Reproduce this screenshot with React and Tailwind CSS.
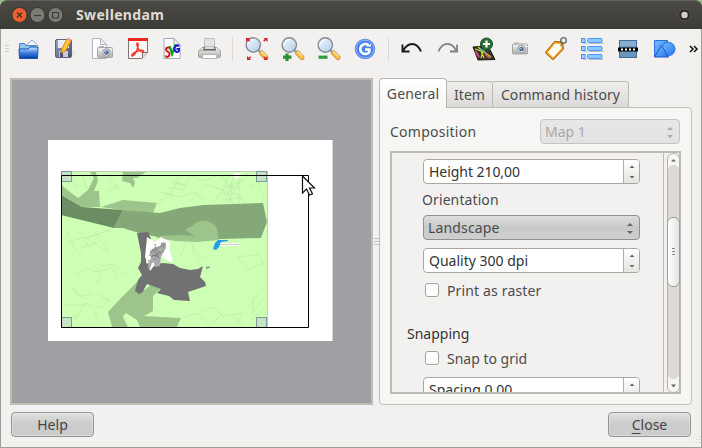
import React from "react";

function Icon({ children, dx = 0 }) {
  return (
    <div className="flex h-6 w-9 shrink-0 items-center justify-center">
      <svg width="24" height="24" viewBox="0 0 24 24" fill="none" className="overflow-visible">
        <g transform={`translate(${dx} 0)`}>{children}</g>
      </svg>
    </div>
  );
}

function Camera({ x, y }) {
  return (
    <g transform={`translate(${x} ${y})`}>
      <rect x="2" y="0" width="5" height="3" fill="#bbb" />
      <rect x=".5" y="1.5" width="15" height="10" rx="1" fill="url(#silver)" stroke="#a5a5a5" />
      <path d="M1 4h15" stroke="#eee" />
      <circle cx="9.5" cy="6.5" r="3.8" fill="#e6e6e6" stroke="#999" />
      <circle cx="9.5" cy="6.5" r="2.3" fill="#41618f" />
      <circle cx="9" cy="6" r=".9" fill="#9cc0ef" />
    </g>
  );
}

function Lens() {
  return (
    <>
      <path d="m16.500 16 4.500 4.500" stroke="#b98a36" strokeWidth="5" strokeLinecap="round" />
      <path d="m16.500 16 4.500 4.500" stroke="#ffbd35" strokeWidth="3.600" strokeLinecap="round" />
      <path d="m16.500 14.500 5 5" stroke="#ffe9a0" strokeWidth="1.200" />
      <path d="m13 13 2.500 2.500" stroke="#a5a5a5" strokeWidth="2.500" />
      <circle cx="8.300" cy="8" r="7.200" fill="url(#lens)" stroke="#858b91" strokeWidth="1.400" />
      <path d="M3.500 7a5 5 0 0 1 5-4" stroke="#fff" />
    </>
  );
}

function Defs() {
  return (
    <svg width="0" height="0" className="absolute">
      <defs>
        <linearGradient id="silver" x2="0" y2="1"><stop stopColor="#f0f0f0" /><stop offset="1" stopColor="#b0b0b0" /></linearGradient>
        <linearGradient id="blue" x2="1" y2="1"><stop stopColor="#7dbcff" /><stop offset="1" stopColor="#2277f0" /></linearGradient>
        <linearGradient id="folder" x2="0" y2="1"><stop stopColor="#d5ebff" /><stop offset=".5" stopColor="#3e83dd" /><stop offset="1" stopColor="#073ba3" /></linearGradient>
        <linearGradient id="lens" x2="1" y2="1"><stop stopColor="#f4faff" /><stop offset="1" stopColor="#afcbe8" /></linearGradient>
        <linearGradient id="disk" x2="1" y2="1"><stop stopColor="#9ca4bd" /><stop offset="1" stopColor="#474c70" /></linearGradient>
      </defs>
    </svg>
  );
}

function TitleBar() {
  return (
    <div className="h-[29px] shrink-0 bg-[#9dbb8e]">
      <div className="flex h-[29px] items-center rounded-t-[7px] border-t border-[#62615b] bg-linear-to-b from-[#4a4943] to-[#3c3b37] pl-3 pr-[10px]">
        <svg width="52" height="18" viewBox="0 0 52 18" fill="none" className="-mt-px">
          <circle cx="7.500" cy="9" r="7.500" fill="#ec6034" stroke="#34332f" />
          <path d="m5 6.500 5 5m0-5-5 5" stroke="#52291c" strokeWidth="1.300" />
          <circle cx="25.500" cy="9" r="7.500" fill="#7b7a73" stroke="#34332f" />
          <path d="M22 9.500h7" stroke="#3c3b37" strokeWidth="1.200" />
          <circle cx="43.500" cy="9" r="7.500" fill="#7b7a73" stroke="#34332f" />
          <path d="M40.500 6.500h6v5.500h-6z" stroke="#3c3b37" strokeWidth="1.200" />
        </svg>
        <span className="-mt-px ml-3 grow text-[14px] font-bold tracking-[0.35px] text-[#dfdbd2]">Swellendam</span>
        <svg width="14" height="14" viewBox="0 0 14 14" className="-mt-px">
          <circle cx="6.500" cy="7" r="6" fill="#2d2c29" stroke="#55544e" />
          <circle cx="6.500" cy="7" r="3.200" fill="#d4cfc5" />
        </svg>
      </div>
    </div>
  );
}

function Toolbar() {
  return (
    <div className="flex h-[40px] shrink-0 items-center">
      <svg width="9" height="8" viewBox="0 0 9 8" className="shrink-0"><path d="M4 .500h4M4 3.500h4M4 6.500h4" stroke="#cbc8c4" /></svg>
      <Icon>
        <path d="M9 9.500 16 3l5.500 5v4H9z" fill="#f4f9ff" stroke="#8fa9cc" />
        <path d="M3.500 6.500h5l1.500 2h10v5h-16.500z" fill="#8cc6ec" stroke="#4a80c4" />
        <path d="M3 12h9l2-2h8l-.500 11.500h-18z" fill="url(#folder)" stroke="#1450b2" />
      </Icon>
      <Icon>
        <path d="M20 14h4l-3 5z" fill="#dddce2" />
        <rect x="3.500" y="2.500" width="16" height="18" rx="1.500" fill="url(#disk)" stroke="#5d6283" />
        <path d="M6 3h11v8H6z" fill="#e8ebf6" />
        <path d="M7 14h9v6H7z" fill="#c8cbd6" /><path d="M8 15h3v5H8z" fill="#50536c" />
        <path d="m9.500 12 5.500-10 4 2-5.500 10-4 2z" fill="#ffb51e" stroke="#d88210" strokeWidth=".8" />
        <path d="m12 12 5-9" stroke="#ffe18a" /><path d="m15 2 4 2 .800-1.500-4-2z" fill="#efa796" />
      </Icon>
      <Icon dx={2}><path d="M2.500 1.500h8l6 6v14h-14zM10.500 1.500v6h6" fill="#fdfdff" stroke="#b0b3c4" /><Camera x={7} y={9} /></Icon>
      <Icon dx={2}>
        <path d="M2.500 1.500h19v14l-5.500 6H2.500z" fill="#faf8f7" stroke="#7d7675" />
        <path d="M2 1h20v3H2z" fill="#ee2725" />
        <path d="M16.500 21v-5.500h5" fill="#e1dcda" stroke="#7d7675" />
        <path d="M11.500 6c-2 0 .500 7 3.500 8.500 2 1.500 4 .500 2-1-2-.800-9 1.500-11 4-1.200 2 1 2 3-.500C11 14 13.500 6 11.500 6z" stroke="#ef3a2d" strokeWidth="1.400" />
      </Icon>
      <Icon dx={.5}>
        <path d="M3.500 1.500h10l6 6v14h-16zM13.500 1.500v6h6" fill="#fdfdff" stroke="#a4a8c0" />
        <path d="M10.500 12c-1-2-5-2-5 .500 0 2.500 4 2 3.500 5s-3.500 3-4 1" stroke="#e01515" strokeWidth="2" />
        <path d="m9 9 2.500 8L15 7.500" stroke="#09a214" strokeWidth="2.200" />
        <path d="M18.500 9.500c-2-2.500-5 0-4.500 3s3.500 3 4.500 1.500V12H16" stroke="#1717dd" strokeWidth="2" />
      </Icon>
      <Icon dx={2}>
        <path d="M6.500 1.500h10v10h-10z" fill="#e4e4e4" stroke="#c0c0c0" />
        <path d="M4 10.500h15l3.500 3.500v5q0 1.500-1.500 1.500H2q-1.500 0-1.500-1.500v-5z" fill="url(#silver)" stroke="#a5a5a5" />
        <path d="M6 9.500h11l1 4H5z" fill="#5c5c5c" /><path d="M7 9.500h9l.500 2.500h-10z" fill="#ddd" />
        <path d="M5 17.500h13l1 4H4z" fill="#fdfdfd" stroke="#b5b5b5" />
        <path d="M2.500 13.500h2" stroke="#79c552" />
      </Icon>
      <div className="mx-[6px] h-6 w-px shrink-0 bg-[#d9d6d3]" />
      <Icon><Lens /><path d="M1 1h4L3.800 2.200l1.500 1.500-1 1-1.500-1.500L1 5zM22.500 1h-4l1.200 1.200-1.500 1.500 1 1 1.500-1.500L22.500 5zM2 23h4l-1.200-1.200 1.500-1.500-1-1-1.500 1.500L2 19zM22.500 23h-4l1.200-1.200-1.500-1.500 1-1 1.500 1.500 1.300-1.300z" fill="#d5202c" /></Icon>
      <Icon><Lens /><path d="M6 16.500v7.500M2 20.200h8.500" stroke="#2c942f" strokeWidth="3.300" /></Icon>
      <Icon><Lens /><path d="M1.500 20.200h9" stroke="#2f9a38" strokeWidth="3.200" /></Icon>
      <Icon>
        <circle cx="12" cy="12" r="9.800" fill="#4b84e8" stroke="#5f8cdb" />
        <circle cx="12" cy="12" r="8.800" stroke="#8fb3fa" />
        <path d="M15.500 8.200a5 5 0 1 0 .800 6.800v-2.500H12" stroke="#fff" strokeWidth="2.600" /><path d="M13 9.500h5V7z" fill="#fff" />
      </Icon>
      <div className="ml-[5px] mr-[5px] h-6 w-px shrink-0 bg-[#d9d6d3]" />
      <Icon dx={-.5}><path d="M3 7.500v7h7M3.500 14C8 5 17 4 21.500 14.500" stroke="#1a1a1a" strokeWidth="1.900" /></Icon>
      <Icon><path d="M21 7.500v7h-7M20.500 14C16 5 7 4 2.500 14.500" stroke="#808080" strokeWidth="1.800" /></Icon>
      <Icon>
        <path d="m1 10 15-1 7 13.500-17 .500z" fill="#38382c" stroke="#151510" />
        <path d="m3 12 6 2 3 7M6 10l6 5 7 5M12 12l-3 9" stroke="#d5de25" strokeWidth="1.200" />
        <path d="m3 14 4 6M13 17l5 4" stroke="#dc4975" strokeWidth="1.800" /><path d="m8 12 5 3" stroke="#53b1a5" strokeWidth="1.500" />
        <circle cx="14.500" cy="7" r="6" fill="#2a7137" stroke="#1d4a26" />
        <path d="M14.500 3.500v7M11 7h7" stroke="#fff" strokeWidth="2.200" />
      </Icon>
      <Icon><Camera x={4} y={5.5} /></Icon>
      <Icon dx={-.5}>
        <path d="m11 4.500 8 .500 1 7-9.500 10q-1 1-2 0l-6-5.500q-1-1 0-2z" fill="#f59b16" stroke="#a76208" />
        <path d="m11.500 6.500 6 .500.500 4.500-8.500 9-5.200-5z" fill="#fffaf0" />
        <path d="m17 9 1.500-3" stroke="#666" />
        <circle cx="20" cy="3.500" r="2.800" stroke="#626262" strokeWidth="1.300" />
      </Icon>
      <Icon>
        {[1.5, 9.5, 17.5].map((y) => (
          <g key={y}>
            <path d={`M3 ${y + 4.800}h4M9 ${y + 4.800}h14.500`} stroke="#bfc3c8" strokeWidth="1.300" />
            <rect x="1.500" y={y} width="3.500" height="4" fill="#9fcbff" stroke="#4c90f5" />
            <rect x="7.500" y={y} width="14.500" height="4" rx="1" fill="#8cc6ff" stroke="#4b96fa" />
          </g>
        ))}
      </Icon>
      <Icon>
        <rect x="3.500" y="3.500" width="17" height="17" fill="#6995bf" stroke="#426b97" />
        <path d="M4 4h16v5H4z" fill="#88afd1" />
        <path d="M2 12.500h20" stroke="#000" strokeWidth="4" /><path d="M5 12.500h16" stroke="#fff" strokeWidth="2" strokeDasharray="2 2" />
      </Icon>
      <Icon>
        <path d="M2.500 3.500h13v16h-13z" fill="url(#blue)" stroke="#2a72dc" />
        <circle cx="16.300" cy="12" r="6.700" fill="url(#blue)" stroke="#2a72dc" />
        <path d="m2.500 20 7-11.500L16.500 20z" fill="url(#blue)" stroke="#1b57c4" />
      </Icon>
      <svg width="10" height="8" viewBox="0 0 10 8" className="ml-[7px] shrink-0"><path d="m1 1 3 3-3 3m4-6 3 3-3 3" fill="none" stroke="#111" strokeWidth="1.500" /></svg>
    </div>
  );
}

function Handle({ x, y }) {
  return <rect x={x} y={y} width="10" height="10" fill="#c8dfc5" fillOpacity=".9" stroke="#769d98" />;
}

function MapCanvas() {
  return (
    <div className="h-[327px] w-[363px] shrink-0 border-2 border-[#bebbb5] bg-[#a09fa4]">
      <svg width="359" height="323" viewBox="12 80 359 323" className="block">
        <path d="M48 140h285v201H48z" fill="#fff" />
        <path d="M332 140h1v201h-1z" fill="#d5d4d8" />
        <path d="M61 171h207v157H61z" fill="#cdffb4" />
        <g fill="none" stroke="#bbe8a5" strokeWidth=".6">
          <path d="m70 176 8 12m4-14 5 15m20-15 12 17m-14 2 14-8M158 205l20-22 7 2 5-9 14 5 14-6M164 193l16 4 15-5 10 9M168 187l17 3m-13-9 16 6m-10-10-7 22m-14-7 14 2m27-2-7 10M204 184l19 6 6-16m-6 16 18-9m-18 9 12 15m-12-15-9 12M233 178l-8 25m15-23-12 22m-5-17 18 3m-20 5 21 2m-21 5 23-3m-5-14v20m-7-21-2 21M250 188l15-13m-9 0 9 26M220 175l25 28m1-26-22 19" />
          <path d="m66 232 9 14m4-15 12 19m4-18 13 19m1-21-23 9M68 242l42-11M64 237l20 21M75 276l12-8 9 4 14-3m-16-4 8 11-6 8m5-18 14-2 9 11m-11-8 4 14M72 288l8 8 12-2m-21-9 7 11 10 3m-13 22 9-18 17 5 9-12m-17 12 6 15m-20-8-12 6m44-19-15-9M186 242l-6 16m9-17 13 18 7-4M195 238l-3 11 7 12M238 257l22-3 5 15m-28-12 12 13 16-8M183 317l15-4 11 13 13-12 12 3 10 11M202 311l12-4 10 11m6-3 14-2m-2 1-5 10M248 308l16-20m-13 27 13-17m-12 22 12-11M253 295v18M65 305h22M80 248l18-5M86 238l23 15" />
        </g>
        <g fill="#9dc58b">
          <path d="m61 185 17 13 10-8 6-12-4-6h6l2 9-4 10h5l1 16H82L61 195z" />
          <path d="M123 172h23l-9 6h-4l2 5-2 5-3-5-8-2zM101 207l22-7 34 3-4 10-31-3z" />
          <path d="m137 282 8 8 7-7 12 2-11 11v15l-9 5 37 2-4 9h-37l-3-7-11-7q-3 2-3 4l5 10h-16l-4-15 12-13z" />
        </g>
        <path d="m61 195 21 12 41 3-9 18-53-13z" fill="#6b8d63" />
        <path d="m123 210 37 3 20-5 23-3 60-2 4 19-6 16-41 1-20-2-20 1-22-1-15-3-14-4-6-2h-9z" fill="#84a877" />
        <path d="m185 230 8-5q6-5 13-4 9 2 11 8l2 11-16-1-8-3z" fill="#9dc58b" />
        <path d="m156 238 4-2 19-1 20 1 20 4-22 2-21-1z" fill="#9dc58b" />
        <path d="m137 233 11-1 3 7-4 12-1 12 5 2 12-2 10 1 7 4 10 2 8-1 5-3-3 11 5 5 1 4-18 6 2 9-16-1-5-4-12-3 4-4-14-5-5 9-3 1-4-3 3-11 4-5-4-7 3-6v-9z" fill="#717171" />
        <path d="m147 237 8 5 6-5 9 5v9l3 11-7-2-4-4-2 7-6 3-4 5-2-7-3-7z" fill="#fff" />
        <path d="m150 251 5-4 5-1 3-4 3 1v5l-3 5-2 4-1 9-5 1-2-7-4 11-1-6 3-7z" fill="#a9a9a9" />
        <path d="m150 253 15-9m-14 13 13-6m-12 12 8-13m-8-1 8 10m-11-4 10 1m-4-12 3 14m3-15 3 5m-15 12-2 10" stroke="#7c7c7c" strokeWidth="1" strokeDasharray="2 1" fill="none" />
        <path d="m213 249 2-6 3-3h10v1l-7 1-2 5-3 3z" fill="#249ee8" />
        <path d="M220 244.500h20" stroke="#f6fff2" strokeWidth="3" /><path d="M220 244.500h20" stroke="#c5bcc5" strokeWidth="1" strokeDasharray="2 .500" />
        <path d="m206 267 3-1 1 2-4 1z" fill="#999" />
        <path d="M233 173h9l-3 3-3 3z" fill="#fff" />
        <path d="M61 171.500h207M267.500 171v157" stroke="#bdd0b8" fill="none" />
        <Handle x={61.5} y={171.5} /><Handle x={256.5} y={171.5} />
        <Handle x={61.5} y={317.5} /><Handle x={256.5} y={317.5} />
        <path d="M61.500 175.500h247v152h-247z" fill="none" stroke="#000" />
        <path d="M302.500 176v17l4-4 3 6 3-1-3-6h5z" fill="#fff" stroke="#111" strokeWidth="1.200" />
      </svg>
    </div>
  );
}

function Arrows({ className = "" }) {
  return (
    <svg width="8" height="14" viewBox="0 0 8 14" className={"shrink-0 " + className}>
      <path d="M1 5h6L4 2zM1 10h6L4 13z" fill="currentColor" />
    </svg>
  );
}

function SpinBox({ children }) {
  return (
    <div className="flex h-[25px] w-[217px] shrink-0 overflow-hidden rounded-[4px] border border-[#aaa7a3] bg-white">
      <span className="grow pl-[5px] text-[14px] leading-[23px] text-[#333]">{children}</span>
      <div className="flex w-[16px] items-center justify-center border-l border-[#b2afac] bg-linear-to-b from-white to-[#e5e3e1] text-[#666]">
        <svg width="6" height="15" viewBox="0 0 6 15"><path d="M.500 4h5L3 1.500zM.500 12h5L3 14.500z" fill="currentColor" /></svg>
      </div>
    </div>
  );
}

function CheckRow({ children }) {
  return (
    <div className="flex h-[20px] shrink-0 items-center gap-2 pl-[2px] text-[#4c4c4c]">
      <span className="size-[14px] rounded-[3px] border border-[#a5a19d] bg-white" />
      {children}
    </div>
  );
}

function Settings() {
  return (
    <div className="flex h-[243px] w-[291px] border-2 border-[#bebbb6] bg-[#f2f1f0]">
      <div className="flex w-[272px] shrink-0 flex-col overflow-hidden border-r border-[#bebbb6] pl-[31px] pt-[6px]">
        <SpinBox><span className="tracking-[-0.05px]">Height 210,00</span></SpinBox>
        <div className="-ml-px mt-[6px] h-5 shrink-0 leading-5 text-[#4c4c4c]"><span className="tracking-[0.1px]">Orientation</span></div>
        <div className="mt-[5px] flex h-[25px] w-[217px] shrink-0 items-center justify-between rounded-[4px] border border-[#92908d] bg-linear-to-b from-[#dedede] via-[#c9c9c9] to-[#cfcfcf] pl-[4px] pr-[5px]">
          <span className="tracking-[0.15px] text-[#4c4c4c]">Landscape</span><Arrows className="text-[#666]" />
        </div>
        <div className="mt-2 shrink-0"><SpinBox><span>Quality 300 dpi</span></SpinBox></div>
        <div className="mt-[7px] shrink-0"><CheckRow><span className="tracking-[0.15px]">Print as raster</span></CheckRow></div>
        <div className="-ml-4 mt-[24px] h-5 shrink-0 leading-5 text-[#333]"><span>Snapping</span></div>
        <div className="mt-[4px] shrink-0"><CheckRow><span>Snap to grid</span></CheckRow></div>
        <div className="mt-[9px] shrink-0"><SpinBox>Spacing 0,00</SpinBox></div>
      </div>
      <div className="-mr-px ml-[3px] flex h-[240px] w-[13px] shrink-0 flex-col rounded-[6px] border border-[#b4b1ad] bg-[#f7f6f5]">
        <svg width="11" height="11" viewBox="0 0 11 11"><path d="M3 7.500h5L5.500 5z" fill="#666" /></svg>
        <div className="flex grow flex-col rounded-[5px] bg-[#dcd9d7] pt-[52px]">
          <div className="-mx-px flex h-[70px] w-[13px] items-center justify-center rounded-[6px] border border-[#9d9a97] bg-linear-to-r from-white to-[#e5e3e1]">
            <svg width="5" height="8" viewBox="0 0 5 8"><path d="M1 .500h3M1 3.500h3M1 6.500h3" stroke="#888" /></svg>
          </div>
        </div>
        <svg width="11" height="13" viewBox="0 0 11 13"><path d="M3 5.500h5L5.500 8.500z" fill="#666" /></svg>
      </div>
    </div>
  );
}

function SidePanel() {
  return (
    <div className="flex h-[327px] w-[313px] shrink-0 flex-col text-[14px]">
      <div className="relative z-10 -mb-px flex h-[30px] shrink-0 items-end text-[#4c4c4c]">
        <div className="flex h-[30px] w-[68px] items-center justify-center rounded-t-[4px] border border-b-0 border-[#b9b6b1] bg-linear-to-b from-white to-[#f6f6f5]"><span className="-mt-px tracking-[0.1px]">General</span></div>
        <div className="flex h-[27px] w-[46px] items-center justify-center rounded-tr-[3px] border border-l-0 border-[#bdbab5] bg-linear-to-b from-[#efeeed] to-[#dcdad8]"><span className="-mt-px">Item</span></div>
        <div className="flex h-[27px] w-[136px] items-center justify-center rounded-tr-[3px] border border-l-0 border-[#bdbab5] bg-linear-to-b from-[#efeeed] to-[#dcdad8]"><span className="-mt-px whitespace-nowrap tracking-[0.1px]">Command history</span></div>
      </div>
      <div className="flex grow flex-col rounded-b-[4px] rounded-tr-[4px] border border-[#c1beb9] bg-[#f6f6f5] pl-[10px] pr-[11px] pt-[11px]">
        <div className="mb-[7px] flex h-[25px] items-center justify-between">
          <span className="tracking-[0.25px] text-[#4c4c4c]">Composition</span>
          <div className="flex h-[25px] w-[140px] items-center justify-between rounded-[4px] border border-[#c6c4c2] bg-linear-to-b from-[#e8e8e8] to-[#e2e2e2] pl-[4px] pr-[5px] text-[#aaa7a4]">
            <span>Map 1</span><Arrows />
          </div>
        </div>
        <Settings />
      </div>
    </div>
  );
}

function Button({ children }) {
  return <button className="flex h-[25px] w-[83px] items-center justify-center rounded-[4px] border border-[#969491] bg-linear-to-b from-[#dfdfdf] via-[#cbcbcb] to-[#cdcdcd] text-[14px] text-[#444] shadow-[inset_0_0_0_1px_#ffffff44]">{children}</button>;
}

export default function App() {
  return (
    <div className="flex h-[448px] w-[702px] flex-col overflow-hidden bg-[#f2f1f0] font-['Noto_Sans','Open_Sans',sans-serif]">
      <Defs />
      <TitleBar />
      <div className="flex grow flex-col border-x border-b border-[#9f9d98]">
        <Toolbar />
        <div className="mt-[9px] flex pl-[9px]">
          <MapCanvas />
          <div className="flex w-[6px] shrink-0 items-center justify-center">
            <svg width="5" height="8" viewBox="0 0 5 8"><path d="M0 .500h5M0 3.500h5M0 6.500h5" stroke="#c5c3c0" /></svg>
          </div>
          <SidePanel />
        </div>
        <div className="mt-[7px] flex justify-between px-[10px]">
          <Button><span>Help</span></Button>
          <Button><span><span className="underline underline-offset-[3px]">C</span>lose</span></Button>
        </div>
        <svg width="10" height="10" viewBox="0 0 10 10" className="-mt-px ml-auto"><path d="M8.500 0v9M5.500 3v6M2.500 6v3" stroke="#cfccc8" strokeDasharray="1 2" /></svg>
      </div>
    </div>
  );
}
